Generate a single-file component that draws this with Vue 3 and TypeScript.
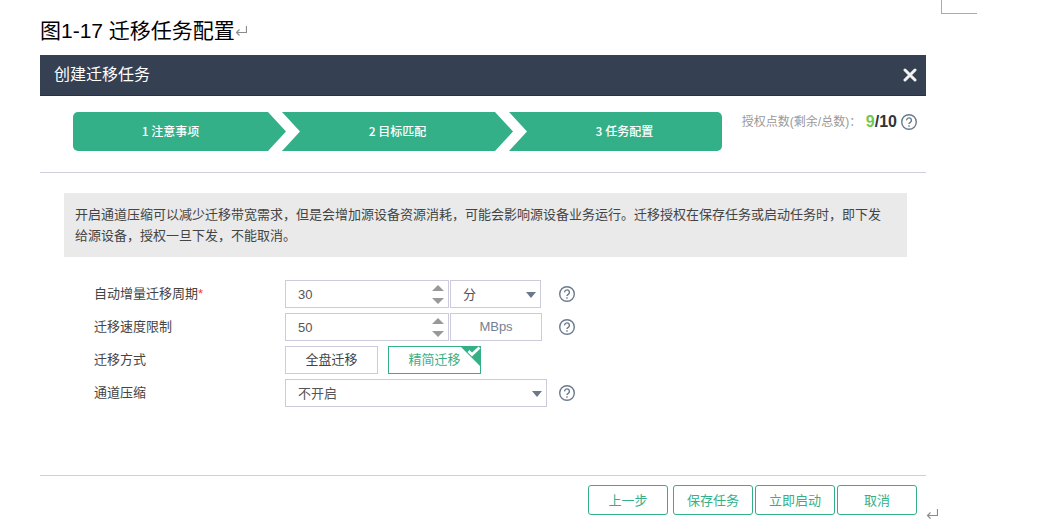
<script setup lang="ts">
import { ref } from 'vue'

const steps: string[] = ['注意事项', '目标匹配', '任务配置']
const actions: string[] = ['上一步', '保存任务', '立即启动', '取消']
const modes: string[] = ['全盘迁移', '精简迁移']

const period = ref<number>(30)
const unit = ref<string>('分')
const speed = ref<number>(50)
const mode = ref<string>('精简迁移')
const compress = ref<string>('不开启')
</script>

<template>
  <div class="page" lang="zh-CN">
    <header class="caption">
      <h1>图1-17 迁移任务配置</h1>
      <svg class="return" viewBox="0 0 12 12" aria-hidden="true"><path d="M11.5 1v6.5H1.5M4.5 4.5l-3 3 3 3" /></svg>
      <span class="crop"></span>
    </header>

    <div class="figure">
      <section class="dialog" aria-labelledby="dlg-title">
        <div class="titlebar">
          <h2 id="dlg-title">创建迁移任务</h2>
          <button type="button" class="close" aria-label="关闭">
            <svg viewBox="0 0 14 14"><path d="M2 2l10 10M12 2L2 12" /></svg>
          </button>
        </div>

        <div class="top">
          <ol class="steps">
            <template v-for="(s, i) in steps" :key="s">
              <li v-if="i > 0" class="sep" aria-hidden="true">
                <svg viewBox="0 0 32 39" preserveAspectRatio="none"><path d="M0 0h14l18 19.5L14 39H0l18-19.5z" /></svg>
              </li>
              <li class="step">{{ i + 1 }} {{ s }}</li>
            </template>
          </ol>
          <div class="license">
            <span class="license-label">授权点数(剩余/总数)：</span>
            <strong><em>9</em>/10</strong>
            <button type="button" class="help" aria-label="帮助">
              <svg viewBox="0 0 16 16"><circle cx="8" cy="8" r="7.3" /><path d="M5.6 6.400a2.400 2.400 0 1 1 3.700 1.900C8.400 8.900 8 9.200 8 10" /><path d="M8 11.200v1.600" /></svg>
            </button>
          </div>
        </div>

        <p class="notice">
          开启通道压缩可以减少迁移带宽需求，但是会增加源设备资源消耗，可能会影响源设备业务运行。迁移授权在保存任务或启动任务时，即下发给源设备，授权一旦下发，不能取消。
        </p>

        <form class="form" @submit.prevent>
          <div class="row">
            <label class="name" for="period">自动增量迁移周期<i>*</i></label>
            <div class="control">
              <div class="number">
                <input id="period" v-model.number="period" type="text" />
                <span class="spin">
                  <button type="button" aria-label="增加" @click="period++"><svg viewBox="0 0 12 6"><path d="M6 0l6 6H0z" /></svg></button>
                  <button type="button" aria-label="减少" @click="period--"><svg viewBox="0 0 12 6"><path d="M0 0h12L6 6z" /></svg></button>
                </span>
              </div>
              <div class="select unit">
                <select v-model="unit" aria-label="周期单位"><option>分</option></select>
                <svg viewBox="0 0 10 6"><path d="M0 0h10L5 6z" /></svg>
              </div>
            </div>
            <button type="button" class="help" aria-label="帮助">
              <svg viewBox="0 0 16 16"><circle cx="8" cy="8" r="7.3" /><path d="M5.6 6.400a2.400 2.400 0 1 1 3.700 1.900C8.400 8.900 8 9.200 8 10" /><path d="M8 11.200v1.600" /></svg>
            </button>
          </div>

          <div class="row">
            <label class="name" for="speed">迁移速度限制</label>
            <div class="control">
              <div class="number">
                <input id="speed" v-model.number="speed" type="text" />
                <span class="spin">
                  <button type="button" aria-label="增加" @click="speed++"><svg viewBox="0 0 12 6"><path d="M6 0l6 6H0z" /></svg></button>
                  <button type="button" aria-label="减少" @click="speed--"><svg viewBox="0 0 12 6"><path d="M0 0h12L6 6z" /></svg></button>
                </span>
              </div>
              <span class="suffix">MBps</span>
            </div>
            <button type="button" class="help" aria-label="帮助">
              <svg viewBox="0 0 16 16"><circle cx="8" cy="8" r="7.3" /><path d="M5.6 6.400a2.400 2.400 0 1 1 3.700 1.900C8.400 8.900 8 9.200 8 10" /><path d="M8 11.200v1.600" /></svg>
            </button>
          </div>

          <div class="row" role="radiogroup" aria-labelledby="mode-name">
            <span id="mode-name" class="name">迁移方式</span>
            <div class="control modes">
              <label v-for="m in modes" :key="m" class="mode" :class="{ on: mode === m }">
                <input v-model="mode" type="radio" name="mode" :value="m" />
                <span>{{ m }}</span>
                <svg v-if="mode === m" class="tick" viewBox="0 0 21 21" aria-hidden="true">
                  <path class="corner" d="M0 0h21v21z" />
                  <path class="mark" d="M8.500 5l3.500 3.500 7.500-7" />
                </svg>
              </label>
            </div>
          </div>

          <div class="row">
            <label class="name" for="compress">通道压缩</label>
            <div class="control">
              <div class="select">
                <select id="compress" v-model="compress"><option>不开启</option></select>
                <svg viewBox="0 0 10 6"><path d="M0 0h10L5 6z" /></svg>
              </div>
            </div>
            <button type="button" class="help" aria-label="帮助">
              <svg viewBox="0 0 16 16"><circle cx="8" cy="8" r="7.3" /><path d="M5.6 6.400a2.400 2.400 0 1 1 3.700 1.900C8.400 8.900 8 9.200 8 10" /><path d="M8 11.200v1.600" /></svg>
            </button>
          </div>
        </form>

        <footer class="actions">
          <button v-for="a in actions" :key="a" type="button">{{ a }}</button>
        </footer>
      </section>
      <svg class="return" viewBox="0 0 12 12" aria-hidden="true"><path d="M11.5 1v6.5H1.5M4.5 4.5l-3 3 3 3" /></svg>
    </div>
  </div>
</template>

<style>
body {
  margin: 0;
  background: #fff;
}
</style>

<style scoped>
.page,
.page button,
.page input,
.page select {
  font-family: "Liberation Sans", "Noto Sans CJK SC", sans-serif;
  font-size: 13px;
}
.page {
  color: #444;
}
.page *,
.page *::before {
  box-sizing: border-box;
}
button {
  padding: 0;
  border: 0;
  background: none;
  cursor: pointer;
}
svg {
  display: block;
}
.caption {
  display: flex;
  align-items: center;
  height: 55px;
  padding: 0 68px 0 40px;
}
h1 {
  margin: 6px 0 0;
  font-size: 21px;
  line-height: 32px;
  font-weight: 400;
  color: #000;
}
.return {
  flex: none;
  width: 12px;
  height: 12px;
  fill: none;
  stroke: #8c8c8c;
  stroke-width: 1.2;
}
.caption .return {
  margin-top: 6px;
}
.crop {
  align-self: flex-start;
  width: 36px;
  height: 14px;
  margin-left: auto;
  border: solid #aaa;
  border-width: 0 0 1px 1px;
}
.figure {
  display: flex;
  align-items: flex-end;
  padding: 0 107px 0 40px;
}
.dialog {
  flex: 1;
  min-width: 0;
}
.titlebar {
  display: flex;
  align-items: center;
  justify-content: space-between;
  height: 41px;
  padding: 0 9px 0 14px;
  background: #354052;
  border-bottom: 1px solid #263248;
}
h2 {
  margin: 0;
  font-size: 16px;
  line-height: 24px;
  font-weight: 400;
  color: #fff;
}
.close svg {
  width: 14px;
  height: 14px;
  fill: none;
  stroke: #f2f2f2;
  stroke-width: 3;
  stroke-linecap: round;
}
.top {
  display: flex;
  align-items: flex-start;
  gap: 20px;
  padding: 16px 9px 21px 33px;
  border-bottom: 1px solid #cfcde0;
}
.steps {
  flex: 1;
  display: flex;
  height: 39px;
  margin: 0;
  padding: 0;
  overflow: hidden;
  list-style: none;
  border-radius: 5px;
  background: #34b088;
}
.step {
  flex: 1;
  font-family: "Noto Sans CJK SC", sans-serif;
  font-size: 12px;
  line-height: 38px;
  font-weight: 500;
  text-align: center;
  color: #fff;
}
.sep,
.sep svg {
  width: 32px;
  height: 39px;
  fill: #fff;
}
.license {
  display: flex;
  align-items: center;
  height: 20px;
  white-space: nowrap;
}
.license-label {
  width: 124px;
  font-size: 12px;
  line-height: 18px;
  color: #999;
}
.license strong {
  margin-right: 4px;
  font-size: 16px;
  color: #333;
}
.license em {
  font-style: normal;
  color: #72c84e;
}
.help svg {
  width: 16px;
  height: 16px;
  overflow: visible;
  fill: none;
  stroke: #6b7a8c;
  stroke-width: 1.4;
}
.notice {
  margin: 20px 19px 0 24px;
  padding: 11px 20px 11px 11px;
  line-height: 21px;
  background: #eaeaea;
  color: #444;
}
.form {
  display: grid;
  gap: 5px;
  padding: 23px 0 68px 54px;
}
.row {
  display: flex;
  align-items: center;
  height: 28px;
}
.name {
  align-self: flex-start;
  width: 191px;
  line-height: 28px;
}
.name i {
  font-style: normal;
  color: #f33;
}
.control {
  display: flex;
  gap: 1px;
  width: 262px;
  margin-right: 12px;
}
.number {
  display: flex;
  width: 164px;
  height: 28px;
  border: 1px solid #cccbdc;
}
.number input {
  flex: 1;
  min-width: 0;
  padding: 0 0 0 12px;
  border: 0;
  outline: 0;
  background: none;
  color: #555;
}
.spin {
  display: flex;
  flex-direction: column;
  justify-content: center;
  gap: 7px;
  width: 16px;
}
.spin svg {
  width: 12px;
  height: 6px;
  fill: #999;
}
.spin button {
  width: 12px;
}
.select {
  position: relative;
  flex: 1;
  height: 28px;
}
.select.unit {
  flex: none;
  width: 91px;
}
.select select {
  width: 100%;
  height: 28px;
  padding: 0 20px 0 12px;
  border: 1px solid #cccbdc;
  border-radius: 0;
  appearance: none;
  background: #fff;
  color: #555;
}
.select svg {
  position: absolute;
  top: 12px;
  right: 5px;
  width: 10px;
  height: 6px;
  fill: #6b788a;
  pointer-events: none;
}
.suffix {
  width: 92px;
  height: 28px;
  border: 1px solid #cccbdc;
  line-height: 26px;
  text-align: center;
  color: #757f92;
}
.modes {
  gap: 10px;
}
.mode {
  position: relative;
  width: 93px;
  height: 28px;
  border: 1px solid #cccbdc;
  line-height: 26px;
  text-align: center;
  cursor: pointer;
}
.mode input {
  position: absolute;
  inset: 0;
  width: 100%;
  height: 100%;
  margin: 0;
  opacity: 0;
}
.mode.on {
  border-color: #34b088;
  color: #34b088;
}
.tick {
  position: absolute;
  top: -1px;
  right: -1px;
  width: 21px;
  height: 21px;
}
.corner {
  fill: #34b088;
}
.mark {
  fill: none;
  stroke: #fff;
  stroke-width: 2.8;
}
.actions {
  display: flex;
  justify-content: flex-end;
  gap: 2px;
  padding: 9px 9px 5px 0;
  border-top: 1px solid #cfcde0;
}
.actions button {
  width: 80px;
  height: 30px;
  padding-bottom: 2px;
  border: 1px solid #34b088;
  border-radius: 3px;
  color: #34b088;
}
.actions button:first-child {
  margin-right: 3px;
}
</style>
